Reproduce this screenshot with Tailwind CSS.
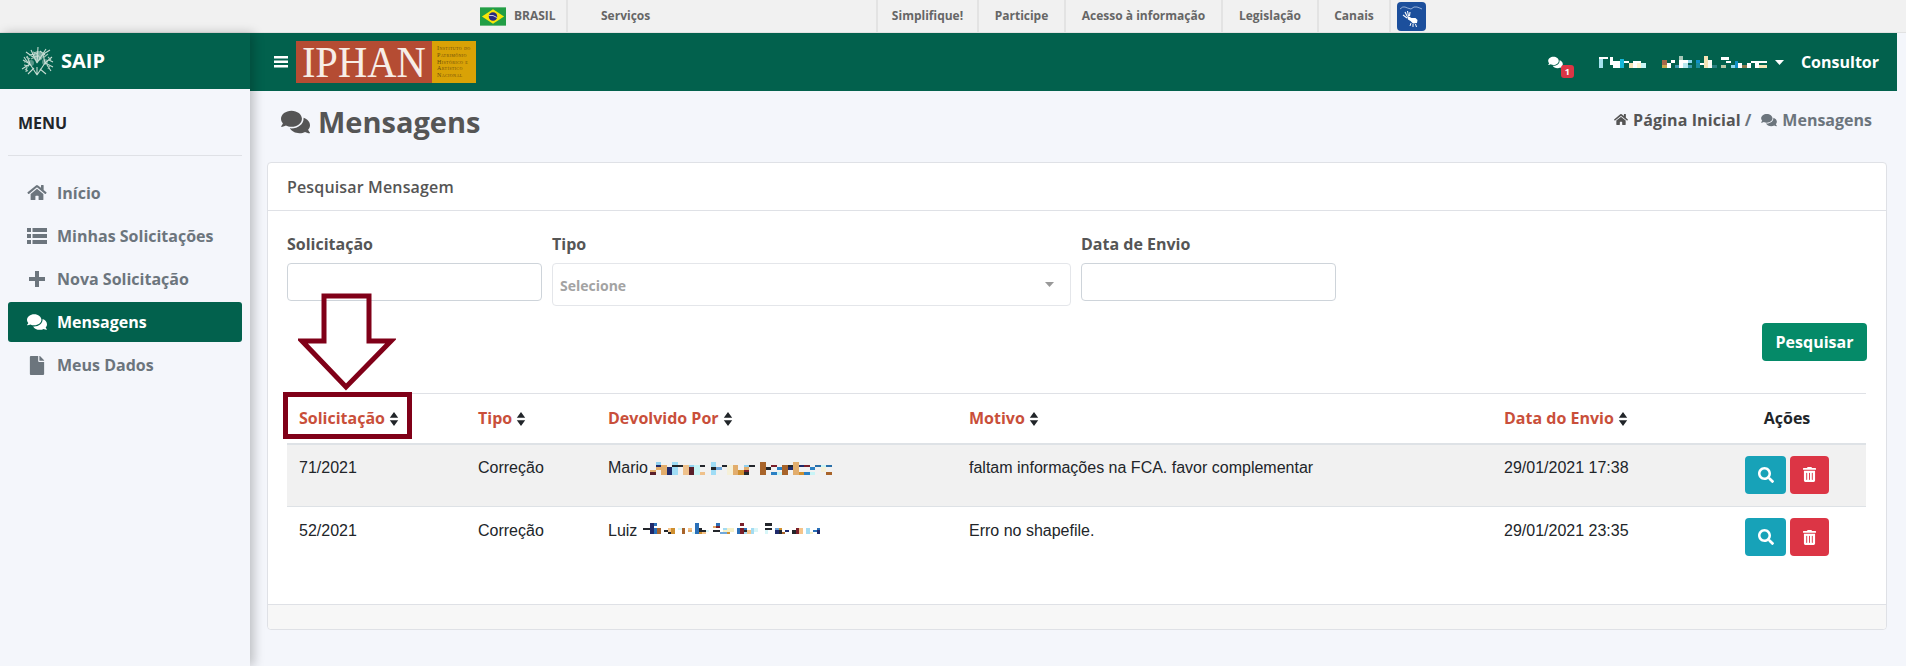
<!DOCTYPE html>
<html lang="pt-BR">
  <head>
    <meta charset="UTF-8" />
    <title>SAIP - Mensagens</title>
    <script src="https://cdn.jsdelivr.net/npm/@tailwindcss/browser@4"></script>
  </head>
  <body class="relative w-[1906px] h-[666px] overflow-hidden bg-[#f4f6fb] font-['Open_Sans',sans-serif]">
    <svg class="hidden">
      <symbol id="i-comments" viewBox="0 0 576 512"><path fill="currentColor" d="M416 192c0-88.4-93.1-160-208-160S0 103.6 0 192c0 34.3 14.1 65.9 38 92-13.4 30.2-35.5 54.2-35.8 54.5-2.2 2.3-2.8 5.7-1.5 8.7S4.8 352 8 352c36.6 0 66.9-12.3 88.7-25 32.2 15.7 70.3 25 111.3 25 114.9 0 208-71.6 208-160zm122 220c23.9-26 38-57.7 38-92 0-66.9-53.5-124.2-129.3-148.1.9 6.6 1.3 13.3 1.3 20.1 0 105.9-107.7 192-240 192-10.8 0-21.3-.8-31.7-1.9C207.8 439.6 281.8 480 368 480c41 0 79.1-9.2 111.3-25 21.8 12.7 52.1 25 88.7 25 3.2 0 6.1-1.9 7.3-4.8 1.3-2.9.7-6.3-1.5-8.7-.3-.3-22.4-24.2-35.8-54.5z"/></symbol>
      <symbol id="i-home" viewBox="0 0 576 512"><path fill="currentColor" d="M280.37 148.26L96 300.11V464a16 16 0 0 0 16 16l112.06-.29a16 16 0 0 0 15.92-16V368a16 16 0 0 1 16-16h64a16 16 0 0 1 16 16v95.64a16 16 0 0 0 16 16.05L464 480a16 16 0 0 0 16-16V300L295.67 148.26a12.19 12.19 0 0 0-15.3 0zM571.6 251.47L488 182.56V44.05a12 12 0 0 0-12-12h-56a12 12 0 0 0-12 12v72.61L318.47 43a48 48 0 0 0-61 0L4.34 251.47a12 12 0 0 0-1.6 16.9l25.5 31A12 12 0 0 0 45.15 301l235.22-193.74a12.19 12.19 0 0 1 15.3 0L530.9 301a12 12 0 0 0 16.9-1.6l25.5-31a12 12 0 0 0-1.7-16.93z"/></symbol>
      <symbol id="i-search" viewBox="0 0 512 512"><path fill="currentColor" d="M505 442.7L405.3 343c-4.5-4.5-10.6-7-17-7H372c27.6-35.3 44-79.7 44-128C416 93.1 322.9 0 208 0S0 93.1 0 208s93.1 208 208 208c48.3 0 92.7-16.4 128-44v16.3c0 6.4 2.5 12.5 7 17l99.7 99.7c9.4 9.4 24.6 9.4 33.9 0l28.3-28.3c9.4-9.4 9.4-24.6.1-34zM208 336c-70.7 0-128-57.2-128-128 0-70.7 57.2-128 128-128 70.7 0 128 57.2 128 128 0 70.7-57.2 128-128 128z"/></symbol>
      <symbol id="i-file" viewBox="0 0 384 512"><path fill="currentColor" d="M224 136V0H24C10.7 0 0 10.7 0 24v464c0 13.3 10.7 24 24 24h336c13.3 0 24-10.7 24-24V160H248c-13.2 0-24-10.8-24-24zm160-14.1v6.1H256V0h6.1c6.4 0 12.5 2.5 17 7l97.9 98c4.5 4.5 7 10.6 7 16.9z"/></symbol>
      <symbol id="i-trash" viewBox="0 0 448 512"><path fill="currentColor" d="M32 464a48 48 0 0 0 48 48h288a48 48 0 0 0 48-48V128H32zm272-256a16 16 0 0 1 32 0v224a16 16 0 0 1-32 0zm-96 0a16 16 0 0 1 32 0v224a16 16 0 0 1-32 0zm-96 0a16 16 0 0 1 32 0v224a16 16 0 0 1-32 0zM432 32H312l-9-19a24 24 0 0 0-22-13H167a24 24 0 0 0-22 13l-9 19H16A16 16 0 0 0 0 48v32a16 16 0 0 0 16 16h416a16 16 0 0 0 16-16V48a16 16 0 0 0-16-16z"/></symbol>
      <symbol id="i-sort" viewBox="0 0 10 16"><path fill="currentColor" d="M5 0l4.800 6.600H.2zM5 16L.2 9.400h9.600z"/></symbol>
    </svg>

    <!-- Barra do governo -->
    <div class="flex h-[33px] bg-[#f1f1f1] border-b border-[#e2e2e2] pl-[480px] text-[12px] font-bold text-[#666]">
      <div class="flex items-center w-[88px] border-r-2 border-[#e3e3e3]">
        <svg width="26" height="19" viewBox="0 0 27 19"><rect width="27" height="19" fill="#229e45"/><path d="M13.5 2L25 9.5 13.5 17 2 9.5z" fill="#f8e509"/><circle cx="13.5" cy="9.5" r="4.4" fill="#2b2a7e"/><path d="M9.5 8.5q4-1 8 2" stroke="#fff" stroke-width=".8" fill="none"/></svg>
        <span class="ml-[8px]">BRASIL</span>
      </div>
      <div class="flex items-center w-[310px] pl-[33px] border-r-2 border-[#e3e3e3]">Serviços</div>
      <div class="flex items-center justify-center w-[101px] border-r-2 border-[#e3e3e3]">Simplifique!</div>
      <div class="flex items-center justify-center w-[87px] border-r-2 border-[#e3e3e3]">Participe</div>
      <div class="flex items-center justify-center w-[157px] border-r-2 border-[#e3e3e3]">Acesso à informação</div>
      <div class="flex items-center justify-center w-[96px] border-r-2 border-[#e3e3e3]">Legislação</div>
      <div class="flex items-center justify-center w-[72px] border-r-2 border-[#e3e3e3]">Canais</div>
      <div class="ml-[6px] mt-[2px] w-[29px] h-[29px] rounded-[4px] bg-[#1c4f9c] flex items-center justify-center">
        <svg width="25" height="25" viewBox="0 0 25 25" fill="none" stroke="#fff">
          <path d="M1 5q3-3 5-2t6 2q3-3 6-2t5 2" stroke-width=".7" stroke="#c8d8f0"/>
          <path d="M6 8l2 4M8.500 7l1 5M11 8l-.5 4M4 11l4 3" stroke-width="1.100"/>
          <path d="M8 12l2 .5 2.500 1.500h4l2 2-.5 3-4 .5-2.500-2.500-2.500-1.500z" fill="#fff" stroke="none"/>
          <path d="M14 20v3M16.500 20l1 3M12 19l-1 3" stroke-width="1"/>
        </svg>
      </div>
    </div>

    <div class="flex h-[633px]">
      <!-- Menu lateral -->
      <aside class="relative z-10 w-[250px] shrink-0 bg-[#f4f6fb] shadow-[4px_0_10px_rgba(0,0,0,0.22)]">
        <div class="flex items-center h-[56px] bg-[#02614d] pl-[21px]">
          <svg width="33" height="32" viewBox="0 0 33 32" fill="none" stroke="#c4dbd1" stroke-width="1.100">
            <path d="M16 30L9 19M9 19L1 24M9 19L2 15M9 19L6 11M8 21L3 20M7 18L3 12M6 22L5 27M16 30L24 18M24 18L32 22M24 18L31 12M24 18L22 9M26 20L30 26M28 15L32 17M16 18L10 5M16 18L17 2M16 18L25 4M12 12L5 7M21 10L29 5M13 23L7 29M19 24L25 29M14 9L8 10M19 6L24 10M16 22V30"/>
            <path d="M5 12l4 2M3 17l5-1M4 24l3 2M27 24l2-4M27 12l3 3M22 13l5-4M12 7l5 2M10 14l6-3M20 14l-5-6" stroke="#9fc2b4"/>
            <circle cx="17" cy="11" r="5" fill="#d6e7e0" stroke="none" opacity=".55"/>
            <circle cx="10" cy="18" r="3" fill="#d6e7e0" stroke="none" opacity=".4"/>
            <circle cx="24" cy="17" r="3" fill="#d6e7e0" stroke="none" opacity=".4"/>
          </svg>
          <span class="ml-[7px] text-[20px] font-bold text-white">SAIP</span>
        </div>
        <div class="px-[8px]">
          <div class="h-[67px] flex items-center border-b border-[#dfe1e6] pt-[2px] pl-[10px] text-[16px] font-bold text-[#212529]">MENU</div>
          <nav class="mt-[15px] text-[16px] font-bold text-[#6c757d]">
            <a class="flex items-center h-[43px] pl-[19px]"><svg class="w-[20px] h-[17px]"><use href="#i-home"/></svg><span class="ml-[10px]">Início</span></a>
            <a class="flex items-center h-[43px] pl-[19px]">
              <svg class="w-[20px] h-[16px]" viewBox="0 0 20 16" fill="currentColor"><path d="M0 0h4v4H0zM5.500 0H20v4H5.500zM0 6h4v4H0zM5.500 6H20v4H5.500zM0 12h4v4H0zM5.500 12H20v4H5.500z"/></svg>
              <span class="ml-[10px]">Minhas Solicitações</span>
            </a>
            <a class="flex items-center h-[43px] pl-[19px]">
              <svg class="w-[20px] h-[16px]" viewBox="0 0 20 16" fill="currentColor"><path d="M8 0h4v6h6v4h-6v6H8v-6H2V6h6z"/></svg>
              <span class="ml-[10px]">Nova Solicitação</span>
            </a>
            <a class="flex items-center h-[40px] mt-[2px] pl-[19px] rounded-[3px] bg-[#02614d] text-white"><svg class="w-[20px] h-[18px]"><use href="#i-comments"/></svg><span class="ml-[10px]">Mensagens</span></a>
            <a class="flex items-center h-[46px] pl-[19px]"><svg class="w-[20px] h-[19px]"><use href="#i-file"/></svg><span class="ml-[10px]">Meus Dados</span></a>
          </nav>
        </div>
      </aside>

      <div class="flex-1 min-w-0">
        <!-- Topo -->
        <header class="flex items-center h-[58px] mr-[9px] bg-[#02614d] text-white">
          <svg class="ml-[24px]" width="14" height="12" viewBox="0 0 14 12" fill="#fff"><path d="M0 0h14v2.500H0zM0 4.500h14V7H0zM0 9h14v2.500H0z"/></svg>
          <div class="flex ml-[8px] h-[42px] w-[180px]">
            <div class="w-[136px] bg-[#b54c33] flex items-center justify-center font-['Liberation_Serif',serif] text-[45px] leading-none text-[#f7ede6]"><span class="inline-block scale-x-[0.9]">IPHAN</span></div>
            <div class="w-[44px] bg-[#d9a206] flex flex-col justify-center pl-[5px] text-[6px] leading-[6.8px] text-[#6e4c0c] font-['Liberation_Serif',serif] tracking-[.4px] [font-variant:small-caps]">
              <span>Instituto do</span><span>Patrimônio</span><span>Histórico e</span><span>Artístico</span><span>Nacional</span>
            </div>
          </div>
          <div class="relative ml-auto mr-[37px] w-[14px] h-[12px]">
            <svg class="w-[15px] h-[13px] text-white"><use href="#i-comments"/></svg>
            <span class="absolute left-[13px] top-[9px] flex items-center justify-center w-[13px] h-[13px] rounded-[3px] bg-[#dc3545] text-[9px] font-bold">1</span>
          </div>
          <svg width="168" height="12" viewBox="24 15 504 36">
            <rect x="24" y="18" width="27" height="6" fill="#fff"/><rect x="24" y="24" width="12" height="27" fill="#a4e2ee"/><rect x="57" y="18" width="9" height="24" fill="#fff"/><rect x="66" y="30" width="21" height="21" fill="#fff"/><rect x="87" y="24" width="12" height="27" fill="#16b6d8"/><rect x="99" y="30" width="15" height="6" fill="#fff"/><rect x="114" y="36" width="12" height="15" fill="#f5e3b5"/><rect x="126" y="30" width="12" height="21" fill="#fff"/><rect x="138" y="30" width="12" height="6" fill="#fff"/><rect x="138" y="36" width="12" height="15" fill="#fff5d0"/><rect x="150" y="36" width="15" height="15" fill="#c8f4f6"/>
            <rect x="213" y="27" width="15" height="15" fill="#a8684a"/><rect x="213" y="42" width="15" height="9" fill="#c8a850"/><rect x="228" y="36" width="12" height="15" fill="#fff"/><rect x="240" y="27" width="12" height="9" fill="#fff"/><rect x="252" y="42" width="12" height="9" fill="#3a9ab0"/><rect x="264" y="15" width="12" height="12" fill="#a8c8b8"/><rect x="264" y="27" width="12" height="24" fill="#fff"/><rect x="276" y="27" width="15" height="9" fill="#fff"/><rect x="276" y="36" width="15" height="15" fill="#b8e8f0"/><rect x="291" y="27" width="12" height="9" fill="#8fd8ee"/><rect x="291" y="42" width="12" height="9" fill="#3a9ab0"/>
            <rect x="315" y="27" width="12" height="9" fill="#1090c8"/><rect x="315" y="36" width="12" height="15" fill="#188c9c"/><rect x="327" y="36" width="12" height="6" fill="#fff"/><rect x="339" y="15" width="12" height="36" fill="#f5e3b5"/><rect x="351" y="27" width="12" height="24" fill="#f7fbf4"/><rect x="363" y="42" width="15" height="9" fill="#2a8080"/>
            <rect x="390" y="18" width="24" height="9" fill="#fff"/><rect x="390" y="42" width="15" height="9" fill="#b8c8a8"/><rect x="405" y="30" width="15" height="6" fill="#fff"/><rect x="420" y="42" width="12" height="9" fill="#8fd8ee"/><rect x="432" y="30" width="9" height="21" fill="#1090c8"/><rect x="441" y="36" width="12" height="15" fill="#fff"/><rect x="453" y="42" width="15" height="9" fill="#8a7a50"/><rect x="468" y="36" width="12" height="15" fill="#fff"/><rect x="480" y="30" width="12" height="6" fill="#fff"/><rect x="492" y="30" width="12" height="21" fill="#fff"/><rect x="504" y="30" width="24" height="6" fill="#fff"/><rect x="504" y="42" width="24" height="9" fill="#f5e3b5"/>
          </svg>
          <svg class="ml-[8px]" width="9" height="5" viewBox="0 0 9 5" fill="#fff"><path d="M0 0h9L4.500 5z"/></svg>
          <span class="ml-[17px] mr-[18px] text-[16px] font-bold">Consultor</span>
        </header>

        <!-- Título -->
        <div class="flex items-center justify-between h-[71px] pb-[10px] pl-[31px] pr-[34px]">
          <h1 class="flex items-center text-[29px] font-bold text-[#555]"><svg class="w-[29px] h-[26px]"><use href="#i-comments"/></svg><span class="ml-[8px]">Mensagens</span></h1>
          <div class="flex items-center mb-[4px] text-[16px] font-bold text-[#555]">
            <svg class="w-[14px] h-[13px]"><use href="#i-home"/></svg><span class="ml-[5px] tracking-[.1px]">Página Inicial</span>
            <span class="ml-[4px] mr-[10px] text-[#6c757d]">/</span>
            <svg class="w-[16px] h-[14px] text-[#6c757d]"><use href="#i-comments"/></svg><span class="ml-[5px] text-[#6c757d]">Mensagens</span>
          </div>
        </div>

        <!-- Card -->
        <section class="ml-[17px] w-[1620px] h-[468px] flex flex-col bg-white border border-[#dfe1e6] rounded-[4px]">
          <div class="flex items-center h-[48px] shrink-0 border-b border-[#dfe1e6] pl-[19px] text-[16px] font-semibold tracking-[.15px] text-[#555]">Pesquisar Mensagem</div>
          <div class="flex-1 px-[19px]">
            <div class="grid grid-cols-[255px_519px_255px] gap-x-[10px] pt-[21px] text-[16px] font-bold text-[#555]">
              <div>
                <label class="block h-[31px] leading-[24px]">Solicitação</label>
                <input class="block w-full h-[38px] bg-white border border-[#ced4da] rounded-[4px]" />
              </div>
              <div>
                <label class="block h-[31px] leading-[24px]">Tipo</label>
                <div class="relative flex items-center h-[43px] border border-[#e4e6ea] rounded-[4px] pt-[2px] pl-[7px] text-[14px] text-[#a3a3a3]">
                  Selecione
                  <svg class="absolute right-[16px] top-[18px]" width="9" height="5" viewBox="0 0 9 5" fill="#999"><path d="M0 0h9L4.500 5z"/></svg>
                </div>
              </div>
              <div>
                <label class="block h-[31px] leading-[24px]">Data de Envio</label>
                <input class="block w-full h-[38px] bg-white border border-[#ced4da] rounded-[4px]" />
              </div>
            </div>
            <div class="flex justify-end mt-[17px]">
              <button class="w-[105px] h-[38px] rounded-[4px] bg-[#058a68] text-white text-[16px] font-bold">Pesquisar</button>
            </div>

            <table class="mt-[32px] w-[1579px] table-fixed border-t border-[#dfe1e6] text-[16px] text-[#212529] font-['Liberation_Sans',sans-serif]">
              <colgroup><col class="w-[179px]" /><col class="w-[130px]" /><col class="w-[361px]" /><col class="w-[535px]" /><col class="w-[216px]" /><col class="w-[158px]" /></colgroup>
              <thead class="font-['Open_Sans',sans-serif] text-[16px] text-[#c94f3a]">
                <tr class="h-[50px] border-b-2 border-[#dee2e6]">
                  <th class="px-[12px] text-left font-bold whitespace-nowrap">Solicitação <svg class="inline w-[10px] h-[14px] text-[#212529] align-[-2px]"><use href="#i-sort"/></svg></th>
                  <th class="px-[12px] text-left font-bold whitespace-nowrap">Tipo <svg class="inline w-[10px] h-[14px] text-[#212529] align-[-2px]"><use href="#i-sort"/></svg></th>
                  <th class="px-[12px] text-left font-bold whitespace-nowrap">Devolvido Por <svg class="inline w-[10px] h-[14px] text-[#212529] align-[-2px]"><use href="#i-sort"/></svg></th>
                  <th class="px-[12px] text-left font-bold whitespace-nowrap">Motivo <svg class="inline w-[10px] h-[14px] text-[#212529] align-[-2px]"><use href="#i-sort"/></svg></th>
                  <th class="px-[12px] text-left font-bold whitespace-nowrap">Data do Envio <svg class="inline w-[10px] h-[14px] text-[#212529] align-[-2px]"><use href="#i-sort"/></svg></th>
                  <th class="text-center font-bold text-[#212529]">Ações</th>
                </tr>
              </thead>
              <tbody>
                <tr class="h-[63px] bg-[#f1f1f1] border-b border-[#dee2e6] align-top">
                  <td class="px-[12px] pt-[11px]">71/2021</td>
                  <td class="px-[12px] pt-[11px]">Correção</td>
                  <td class="px-[12px] pt-[11px] whitespace-nowrap">Mario<svg class="inline ml-[2px] align-[-2px]" width="182" height="13" viewBox="30 18 546 39">
                    <path fill="#e2ad6c" d="M30 42h18v6H30zM48 33h15v9H48zM63 27h18v30H63zM312 33h15v9h-15zM279 27h15v30h-15zM459 18h18v39h-18z"/>
                    <path fill="#5a1f2a" d="M30 48h18v9H30zM147 33h15v24h-15z"/>
                    <path fill="#8fd0f0" d="M48 18h15v9H48zM147 27h15v6h-15zM312 27h15v6h-15z"/>
                    <path fill="#1f2a6b" d="M48 27h15v6H48zM81 33h15v24H81zM444 33h15v9h-15zM477 27h15v6h-15z"/>
                    <path fill="#9fdcf5" d="M96 18h18v39H96zM213 18h15v15h-15zM213 42h15v15h-15z"/>
                    <path fill="#23262b" d="M96 27h33v6H96zM180 27h15v6h-15zM213 33h15v9h-15zM246 27h15v6h-15zM312 48h15v9h-15zM327 27h18v6h-18zM378 33h15v9h-15zM444 27h15v6h-15z"/>
                    <path fill="#efc18b" d="M129 27h18v30h-18zM180 48h15v9h-15z"/>
                    <path fill="#c8f4f6" d="M162 27h18v30h-18zM411 48h15v9h-15zM510 48h15v9h-15zM543 27h15v6h-15z"/>
                    <path fill="#6fa8dc" d="M228 33h18v9h-18z"/>
                    <path fill="#f5f0d8" d="M261 27h18v30h-18zM543 33h15v15h-15z"/>
                    <path fill="#cf8f2e" d="M294 42h18v15h-18zM477 48h15v9h-15z"/>
                    <path fill="#7a1f2a" d="M312 42h15v6h-15zM393 27h18v6h-18zM492 27h18v6h-18z"/>
                    <path fill="#a8642a" d="M360 18h18v39h-18zM426 27h18v30h-18zM558 48h18v9h-18z"/>
                    <path fill="#2a80c4" d="M393 48h18v9h-18zM411 33h15v9h-15zM492 48h18v9h-18zM510 33h15v9h-15z"/>
                    <path fill="#2a6fa8" d="M525 27h18v6h-18zM558 27h18v6h-18z"/>
                  </svg></td>
                  <td class="px-[12px] pt-[11px]">faltam informações na FCA. favor complementar</td>
                  <td class="px-[12px] pt-[11px]">29/01/2021 17:38</td>
                  <td class="pt-[11px]">
                    <div class="flex gap-[4px] pl-[37px]">
                      <button class="flex items-center justify-center w-[41px] h-[38px] rounded-[4px] bg-[#17a2b8] text-white"><svg class="w-[16px] h-[16px]"><use href="#i-search"/></svg></button>
                      <button class="flex items-center justify-center w-[39px] h-[38px] rounded-[4px] bg-[#dc3545] text-white"><svg class="w-[13px] h-[15px]"><use href="#i-trash"/></svg></button>
                    </div>
                  </td>
                </tr>
                <tr class="h-[62px] align-top">
                  <td class="px-[12px] pt-[12px]">52/2021</td>
                  <td class="px-[12px] pt-[12px]">Correção</td>
                  <td class="px-[12px] pt-[12px] whitespace-nowrap">Luiz<svg class="inline ml-[6px] align-[0px]" width="177" height="13" viewBox="9 201 531 39">
                    <path fill="#23262b" d="M9 216h21v6H9zM72 222h12v6H72zM84 228h9v6h-9zM177 216h9v12h-9zM186 222h12v6h-12zM219 222h21v6h-21zM312 222h9v6h-9zM375 201h21v9h-21zM375 216h21v6h-21zM417 222h9v12h-9zM456 222h12v12h-12z"/>
                    <path fill="#1f2a6b" d="M30 201h12v33H30zM405 222h12v12h-12zM435 222h12v6h-12zM531 222h9v12h-9z"/>
                    <path fill="#2a70b8" d="M42 201h9v9h-9zM42 216h9v18h-9zM165 201h12v33h-12zM228 201h12v9h-12zM291 216h9v18h-9zM312 216h9v6h-9zM519 222h12v6h-12zM531 216h9v6h-9z"/>
                    <path fill="#a8642a" d="M51 216h12v18H51zM126 216h9v18h-9zM426 228h9v6h-9z"/>
                    <path fill="#f5c48a" d="M84 216h9v12h-9zM144 216h12v6h-12zM321 222h12v12h-12zM477 216h12v18h-12zM186 228h12v6h-12z"/>
                    <path fill="#cf8f2e" d="M93 216h12v18H93zM177 228h9v6h-9zM417 216h9v6h-9zM261 228h9v6h-9z"/>
                    <path fill="#d8f6f8" d="M114 216h12v6h-12zM156 228h9v6h-9zM198 222h9v6h-9zM342 216h12v12h-12zM375 222h9v12h-9z"/>
                    <path fill="#e2a866" d="M144 222h12v6h-12zM219 210h9v6h-9z"/>
                    <path fill="#7a1f2a" d="M228 210h12v6h-12zM300 201h12v9h-12zM300 216h12v18h-12zM468 216h9v18h-9z"/>
                    <path fill="#6fa8dc" d="M240 228h21v6h-21zM405 216h12v6h-12z"/>
                    <path fill="#a4dcf2" d="M249 216h12v6h-12zM312 228h9v6h-9zM333 216h9v18h-9zM498 216h12v18h-12z"/>
                    <path fill="#f5f0c8" d="M249 222h12v6h-12zM261 216h21v12h-21zM510 228h9v6h-9z"/>
                  </svg></td>
                  <td class="px-[12px] pt-[12px]">Erro no shapefile.</td>
                  <td class="px-[12px] pt-[12px]">29/01/2021 23:35</td>
                  <td class="pt-[11px]">
                    <div class="flex gap-[4px] pl-[37px]">
                      <button class="flex items-center justify-center w-[41px] h-[38px] rounded-[4px] bg-[#17a2b8] text-white"><svg class="w-[16px] h-[16px]"><use href="#i-search"/></svg></button>
                      <button class="flex items-center justify-center w-[39px] h-[38px] rounded-[4px] bg-[#dc3545] text-white"><svg class="w-[13px] h-[15px]"><use href="#i-trash"/></svg></button>
                    </div>
                  </td>
                </tr>
              </tbody>
            </table>
          </div>
          <div class="h-[25px] shrink-0 bg-[#f7f7f7] border-t border-[#dfe1e6] rounded-b-[4px]"></div>
        </section>
      </div>
    </div>

    <!-- Destaque desenhado sobre a tela -->
    <svg class="absolute left-[298px] top-[292px] z-20" width="98" height="100" viewBox="0 0 98 100" fill="none" stroke="#800018" stroke-width="5"><path d="M26 4h45v45h22L48 95 4 49h22z"/></svg>
    <div class="absolute left-[283px] top-[392px] z-20 w-[129px] h-[47px] border-[5px] border-[#800018]"></div>
  </body>
</html>
